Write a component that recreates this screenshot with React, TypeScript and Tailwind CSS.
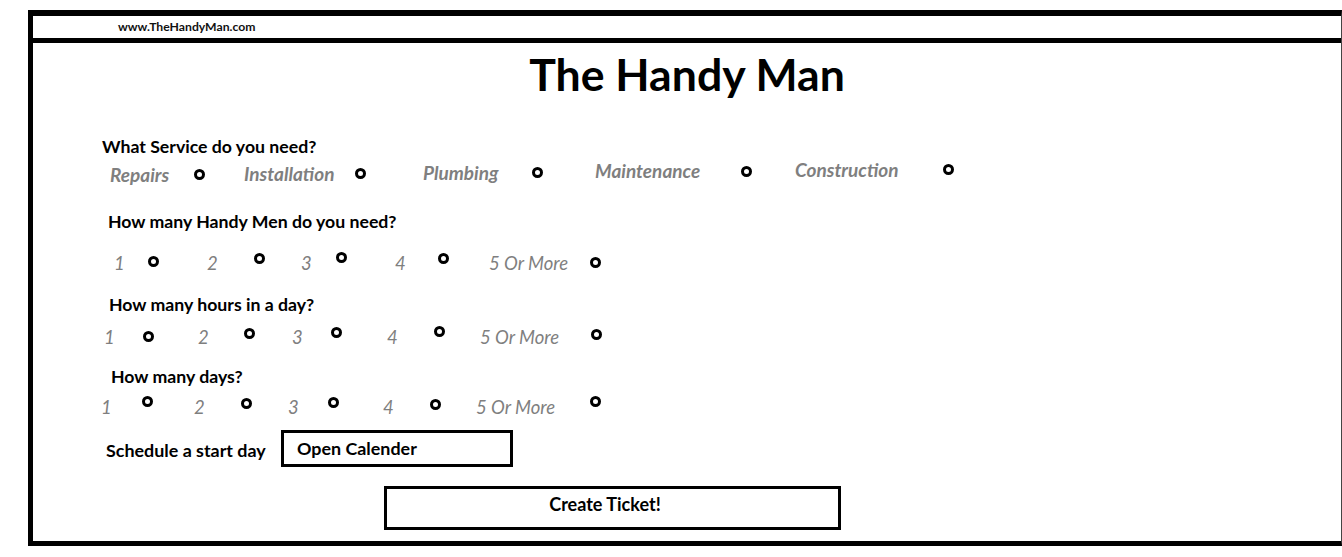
import React from "react";

type Item = { text?: string; w: string; mt: string };

const font = { fontFamily: "Lato, 'Open Sans', sans-serif" };

function Dot({ w, mt }: { w: string; mt: string }) {
  return (
    <div className={`${w} shrink-0`}>
      <div className={`${mt} w-[11px] h-[11px] rounded-full border-[3px] border-black`} />
    </div>
  );
}

function OptionRow({ items, pl, h, bold }: { items: Item[]; pl: string; h: string; bold?: boolean }) {
  return (
    <div className={`flex items-start ${pl} ${h}`}>
      {items.map((it, i) =>
        it.text ? (
          <div
            key={i}
            className={`${it.w} ${it.mt} shrink-0 h-[20px] leading-[20px] italic text-[#7f7f7f] whitespace-nowrap ${
              bold ? "font-bold text-[19px]" : "text-[18.5px]"
            }`}
          >
            {it.text}
          </div>
        ) : (
          <Dot key={i} w={it.w} mt={it.mt} />
        )
      )}
    </div>
  );
}

const services: Item[] = [
  { text: "Repairs", w: "w-[84px]", mt: "mt-[8px]" },
  { w: "w-[50px]", mt: "mt-[12px]" },
  { text: "Installation", w: "w-[111px]", mt: "mt-[7px]" },
  { w: "w-[68px]", mt: "mt-[11px]" },
  { text: "Plumbing", w: "w-[109px]", mt: "mt-[6px]" },
  { w: "w-[63px]", mt: "mt-[10px]" },
  { text: "Maintenance", w: "w-[146px]", mt: "mt-[4px]" },
  { w: "w-[54px]", mt: "mt-[9px]" },
  { text: "Construction", w: "w-[148px]", mt: "mt-[3px]" },
  { w: "w-[20px]", mt: "mt-[7px]" },
];

const handyMen: Item[] = [
  { text: "1", w: "w-[34px]", mt: "mt-[21px]" },
  { w: "w-[59px]", mt: "mt-[24px]" },
  { text: "2", w: "w-[47px]", mt: "mt-[21px]" },
  { w: "w-[47px]", mt: "mt-[21px]" },
  { text: "3", w: "w-[35px]", mt: "mt-[21px]" },
  { w: "w-[59px]", mt: "mt-[20px]" },
  { text: "4", w: "w-[43px]", mt: "mt-[21px]" },
  { w: "w-[51px]", mt: "mt-[21px]" },
  { text: "5 Or More", w: "w-[101px]", mt: "mt-[21px]" },
  { w: "w-[20px]", mt: "mt-[25px]" },
];

const hours: Item[] = [
  { text: "1", w: "w-[39px]", mt: "mt-[12px]" },
  { w: "w-[55px]", mt: "mt-[16px]" },
  { text: "2", w: "w-[46px]", mt: "mt-[12px]" },
  { w: "w-[48px]", mt: "mt-[13px]" },
  { text: "3", w: "w-[39px]", mt: "mt-[12px]" },
  { w: "w-[56px]", mt: "mt-[12px]" },
  { text: "4", w: "w-[47px]", mt: "mt-[12px]" },
  { w: "w-[46px]", mt: "mt-[11px]" },
  { text: "5 Or More", w: "w-[111px]", mt: "mt-[12px]" },
  { w: "w-[20px]", mt: "mt-[14px]" },
];

const days: Item[] = [
  { text: "1", w: "w-[41px]", mt: "mt-[10px]" },
  { w: "w-[52px]", mt: "mt-[9px]" },
  { text: "2", w: "w-[47px]", mt: "mt-[10px]" },
  { w: "w-[47px]", mt: "mt-[11px]" },
  { text: "3", w: "w-[40px]", mt: "mt-[10px]" },
  { w: "w-[55px]", mt: "mt-[10px]" },
  { text: "4", w: "w-[47px]", mt: "mt-[10px]" },
  { w: "w-[46px]", mt: "mt-[12px]" },
  { text: "5 Or More", w: "w-[114px]", mt: "mt-[10px]" },
  { w: "w-[20px]", mt: "mt-[9px]" },
];

function Question({ children, pl, mt }: { children: React.ReactNode; pl: string; mt: string }) {
  return <div className={`${pl} ${mt} h-[20px] leading-[20px] text-[17.7px] font-bold text-black`}>{children}</div>;
}

export default function App() {
  return (
    <div className="w-[1342px] h-[557px] bg-white overflow-hidden pt-[10px] pl-[28px]" style={font}>
      <div className="w-[1314px] h-[536px] border-t-[6px] border-l-[5px] border-b-[5px] border-r border-t-black border-l-black border-b-black border-r-[#444]">
        <div className="h-[27px] border-b-[5px] border-black pl-[85px] flex items-center">
          <span className="text-[12.2px] font-bold text-[#111] leading-none">www.TheHandyMan.com</span>
        </div>

        <h1 className="mt-[3px] h-[55px] leading-[55px] text-[44.6px] font-bold text-black text-center">The Handy Man</h1>

        <Question pl="pl-[69px]" mt="mt-[36px]">What Service do you need?</Question>
        <OptionRow items={services} pl="pl-[77px]" h="h-[30px]" bold />

        <Question pl="pl-[75px]" mt="mt-[25px]">How many Handy Men do you need?</Question>
        <OptionRow items={handyMen} pl="pl-[81px]" h="h-[40px]" />

        <Question pl="pl-[76px]" mt="mt-[23px]">How many hours in a day?</Question>
        <OptionRow items={hours} pl="pl-[71px]" h="h-[35px]" />

        <Question pl="pl-[78px]" mt="mt-[17px]">How many days?</Question>
        <OptionRow items={days} pl="pl-[68px]" h="h-[30px]" />

        <div className="mt-[13px] flex items-center pl-[73px]">
          <div className="w-[175px] text-[17.9px] font-bold text-black pt-[3px]">Schedule a start day</div>
          <button className="w-[232px] h-[37px] border-[3px] border-black pl-[13px] text-left text-[17.9px] font-bold text-black">
            Open Calender
          </button>
        </div>

        <div className="mt-[19px] pl-[351px]">
          <button className="w-[457px] h-[44px] border-[3px] border-black text-center pr-[15px] pb-[7px] text-[18px] font-bold text-black">
            Create Ticket!
          </button>
        </div>
      </div>
    </div>
  );
}
